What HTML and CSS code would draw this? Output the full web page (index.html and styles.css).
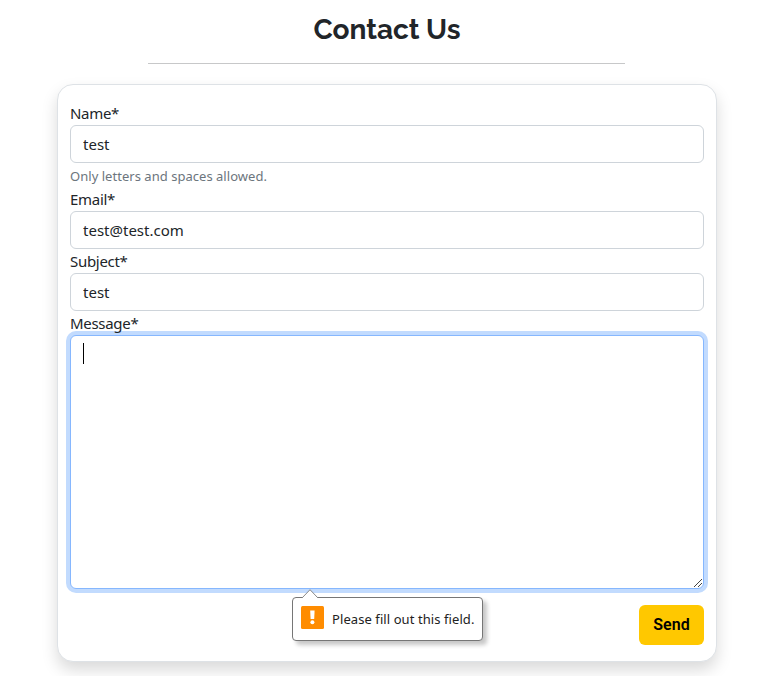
FILE: index.html
```
<!DOCTYPE html>
<html lang="en">
<head>
<meta charset="utf-8">
<title>Contact Us</title>
<link rel="stylesheet" href="styles.css">
</head>
<body>
<main class="page">
  <h1 class="title"><span>Contact Us</span></h1>
  <hr class="rule">
  <form class="card" novalidate>
    <label class="label name-label" for="name">Name*</label>
    <input class="control" id="name" type="text" value="test">
    <div class="hint">Only letters and spaces allowed.</div>
    <label class="label" for="email">Email*</label>
    <input class="control" id="email" type="text" value="test@test.com">
    <label class="label" for="subject">Subject*</label>
    <input class="control" id="subject" type="text" value="test">
    <label class="label" for="message">Message*</label>
    <div class="message">
      <textarea class="control area" id="message"></textarea>
      <span class="caret"></span>
      <svg class="grip" width="10" height="10" viewBox="0 0 10 10"><path d="M1 9L9 1M5 9L9 5" fill="none" stroke="#444" stroke-width="1"/></svg>
      <div class="bubble">
        <svg class="arrow" width="16" height="9" viewBox="0 0 16 9"><path d="M0 9L8 .7L16 9" fill="#fff" stroke="#888" stroke-width="1"/></svg>
        <svg class="warn" width="23" height="23" viewBox="0 0 23 23"><rect width="23" height="23" rx="1.5" fill="#ff8c00"/><path d="M9.2 4.5h4.4l-.4 8.5h-3.6z" fill="#fff"/><circle cx="11.4" cy="16.3" r="2" fill="#fff"/></svg>
        <span class="bubble-text">Please fill out this field.</span>
      </div>
    </div>
    <button class="send" type="button">Send</button>
  </form>
</main>
</body>
</html>
```
FILE: styles.css
```
* { box-sizing: border-box; }
body {
  margin: 0;
  height: 676px;
  overflow: hidden;
  background: #fff;
  color: #212529;
  font: 16px/24px "Segoe UI", "Noto Sans", sans-serif;
}
.page { width: 660px; margin-left: 57px; padding-top: 13px; }
.title {
  margin: 0;
  height: 34px;
  text-align: center;
  font: 700 28px/34px Raleway, Lato, sans-serif;
  letter-spacing: -.05px;
}
.rule { width: 477px; height: 1px; margin: 16px 0 20px 91px; border: 0; background: #c7c8c9; }
.card {
  display: flex;
  flex-direction: column;
  height: 577.5px;
  padding: 16px 12px 0;
  border: 1px solid #dee2e6;
  border-radius: 16px;
  background: #fff;
  box-shadow: 0 8px 16px rgba(0, 0, 0, .15);
}
.label {
  position: relative;
  z-index: 1;
  flex: none;
  height: 24px;
  font-size: 15px;
  line-height: 24px;
  letter-spacing: -.3px;
}
.control {
  display: block;
  flex: none;
  width: 100%;
  height: 38px;
  margin: 0;
  padding: 0 12px;
  border: 1px solid #ced4da;
  border-radius: 6px;
  background: #fff;
  color: #212529;
  font: inherit;
  font-size: 15px;
  outline: 0;
}
.hint { flex: none; height: 24px; color: #6c757d; font-size: 13px; line-height: 26px; letter-spacing: .03px; }
.message { position: relative; flex: none; height: 254px; }
.area { height: 254px; border-color: #86b7fe; box-shadow: 0 0 0 4px #c2dbfe; resize: none; }
.caret { position: absolute; left: 13px; top: 8px; width: 1px; height: 21px; background: #000; }
.grip { position: absolute; right: 1px; bottom: 1px; }
.bubble {
  position: absolute;
  left: 222px;
  top: 262px;
  display: flex;
  align-items: center;
  width: 191px;
  height: 44px;
  padding: 0 8px;
  border: 1px solid #767676;
  border-radius: 4px;
  background: #fff;
  box-shadow: 4px 4px 4px rgba(0, 0, 0, .22);
}
.arrow { position: absolute; left: 9px; top: -9px; }
.warn { flex: none; position: relative; top: -2px; }
.bubble-text { margin-left: 8px; color: #222; font-size: 13px; letter-spacing: .08px; white-space: nowrap; }
.send {
  align-self: flex-end;
  flex: none;
  width: 65px;
  height: 40px;
  margin-top: 16px;
  padding: 0;
  border: 0;
  border-radius: 6px;
  background: #ffc800;
  color: #000;
  font: 600 16px/24px Roboto, sans-serif;
}
```
